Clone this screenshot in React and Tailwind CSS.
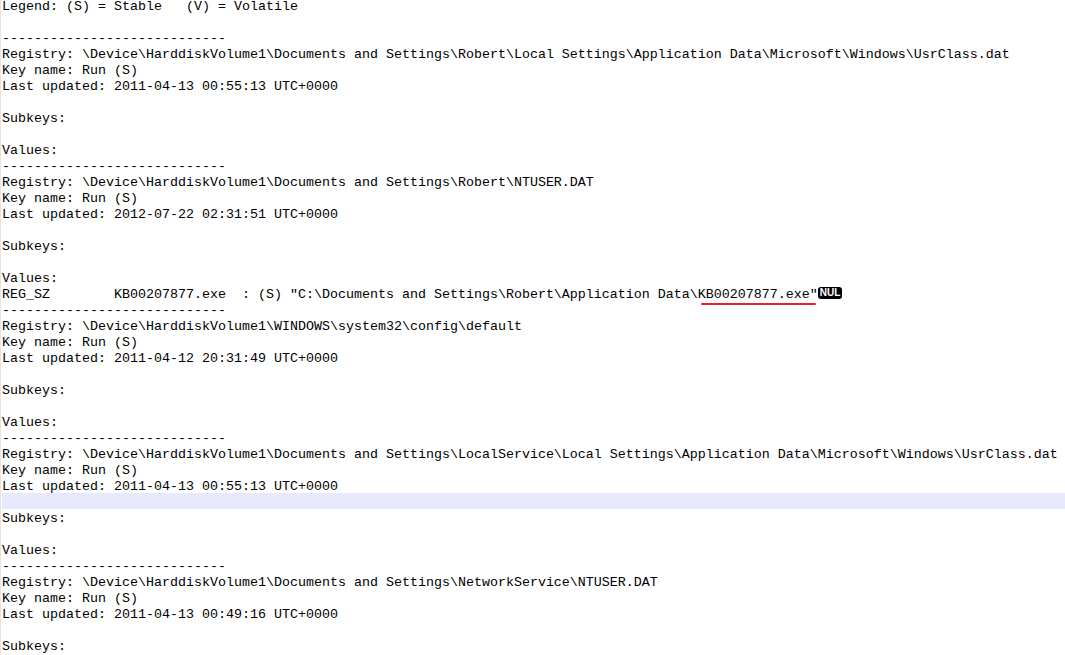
import React from 'react';

const DASHES = '----------------------------';

const lines = [
    'Legend: (S) = Stable   (V) = Volatile',
    '',
    DASHES,
    'Registry: \\Device\\HarddiskVolume1\\Documents and Settings\\Robert\\Local Settings\\Application Data\\Microsoft\\Windows\\UsrClass.dat',
    'Key name: Run (S)',
    'Last updated: 2011-04-13 00:55:13 UTC+0000',
    '',
    'Subkeys:',
    '',
    'Values:',
    DASHES,
    'Registry: \\Device\\HarddiskVolume1\\Documents and Settings\\Robert\\NTUSER.DAT',
    'Key name: Run (S)',
    'Last updated: 2012-07-22 02:31:51 UTC+0000',
    '',
    'Subkeys:',
    '',
    'Values:',
    'REG_VALUE',
    DASHES,
    'Registry: \\Device\\HarddiskVolume1\\WINDOWS\\system32\\config\\default',
    'Key name: Run (S)',
    'Last updated: 2011-04-12 20:31:49 UTC+0000',
    '',
    'Subkeys:',
    '',
    'Values:',
    DASHES,
    'Registry: \\Device\\HarddiskVolume1\\Documents and Settings\\LocalService\\Local Settings\\Application Data\\Microsoft\\Windows\\UsrClass.dat',
    'Key name: Run (S)',
    'Last updated: 2011-04-13 00:55:13 UTC+0000',
    '',
    'Subkeys:',
    '',
    'Values:',
    DASHES,
    'Registry: \\Device\\HarddiskVolume1\\Documents and Settings\\NetworkService\\NTUSER.DAT',
    'Key name: Run (S)',
    'Last updated: 2011-04-13 00:49:16 UTC+0000',
    '',
    'Subkeys:',
];

// the one line with the value data, underline + NUL marker
const ValueLine = () => (
    <>
        {'REG_SZ        KB00207877.exe  : (S) "C:\\Documents and Settings\\Robert\\Application Data\\'}
        <span className="relative">
            KB00207877.exe"
            <span className="absolute left-[3px] right-[2px] top-[16px] h-[2px] rounded-full bg-[#e8202a]"></span>
        </span>
        <span className="inline-block align-top mt-[2px] h-[12px] px-[2px] rounded-[3px] bg-black text-white text-[10px] leading-[12px] font-bold font-['Liberation_Sans',sans-serif]">
            NUL
        </span>
    </>
);

const App = () => {
    return (
        <div className="w-[1065px] h-[655px] overflow-hidden bg-white border-l border-[#e4e4e4]">
            <div className="-mt-[3px] pl-[1px] font-['Liberation_Mono','Courier_New',monospace] text-[13.33px] leading-[20px] text-black">
                {lines.map((line, i) => (
                    <div
                        key={i}
                        className={`h-[16px] whitespace-pre ${i === 31 ? 'bg-[#e8e8ff]' : ''}`}
                    >
                        {line === 'REG_VALUE' ? <ValueLine /> : line}
                    </div>
                ))}
            </div>
        </div>
    );
};

export default App;
